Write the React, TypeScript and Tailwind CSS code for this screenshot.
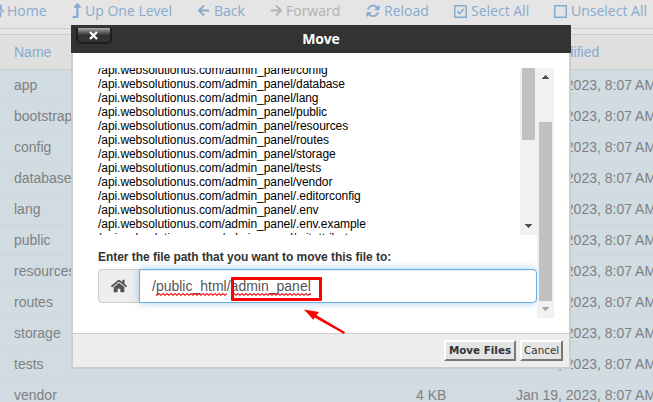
import React from "react";
import { FaArrowLeft, FaArrowRight, FaHome, FaLevelUpAlt } from "react-icons/fa";
import { FaArrowsRotate } from "react-icons/fa6";

const files = ["app", "bootstrap", "config", "database", "lang", "public", "resources", "routes", "storage", "tests", "vendor"];
const paths = ["config", "database", "lang", "public", "resources", "routes", "storage", "tests", "vendor", ".editorconfig", ".env", ".env.example", ".gitattributes"];

function Box({ checked = false }: { checked?: boolean }) {
  return (
    <svg width="13" height="13" viewBox="0 0 13 13" fill="none" stroke="currentColor">
      <rect x=".75" y=".75" width="11.5" height="11.5" strokeWidth="1.5" />
      {checked && <path d="M3.2 6.2 5.5 8.5 9.8 4" strokeWidth="1.6" />}
    </svg>
  );
}

function Tool({ className, icon, label }: { className: string; icon: React.ReactNode; label: string }) {
  return (
    <div className={`flex h-[22px] shrink-0 items-center ${className}`}>
      {icon}
      <span className="-mt-[2px] whitespace-nowrap">{label}</span>
    </div>
  );
}

function Arrow({ down = false, light = false }: { down?: boolean; light?: boolean }) {
  return (
    <svg width="7" height="4" viewBox="0 0 7 4" shapeRendering="crispEdges" className={`${down ? "rotate-180" : ""} ${light ? "text-[#a3a3a3]" : "text-[#505050]"}`}>
      <path d="M0 4V3H1V2H2V1H3V0H4V1H5V2H6V3H7V4Z" fill="currentColor" />
    </svg>
  );
}

function Misspelt({ children }: { children: string }) {
  return (
    <span className="relative inline-block">
      {children}
      <svg className="absolute bottom-[1px] left-0 h-[3px] w-full" aria-hidden="true">
        <defs>
          <pattern id="spelling" width="4" height="3" patternUnits="userSpaceOnUse">
            <path d="M-1 .5 1 2.3 3 .5 5 2.3" fill="none" stroke="#ee1111" strokeWidth="1.1" />
          </pattern>
        </defs>
        <rect width="100%" height="3" fill="url(#spelling)" />
      </svg>
    </span>
  );
}

export default function App() {
  return (
    <div className="relative h-[402px] w-[653px] overflow-hidden bg-[#e5e5e5] font-['Liberation_Sans',Arial,sans-serif] text-[14px] text-[#808080]">
      <div className="flex h-[29px] border-b border-[#cbcbcb] font-['Open_Sans',sans-serif] text-[14px] text-[#87abd0]">
        <Tool className="-ml-[12px] w-[84px] gap-[3px]" icon={<FaHome size={16} />} label="Home" />
        <Tool className="w-[125px] gap-[4px]" icon={<FaLevelUpAlt size={15} className="-mt-[2px] w-[9px]" preserveAspectRatio="none" />} label="Up One Level" />
        <Tool className="w-[73px] gap-[4px]" icon={<FaArrowLeft size={13} className="-mt-[1px]" />} label="Back" />
        <Tool className="w-[96px] gap-[3px] text-[#b1b1b1]" icon={<FaArrowRight size={13} className="-mt-[1px]" />} label="Forward" />
        <Tool className="w-[88px] gap-[4px]" icon={<FaArrowsRotate size={14} />} label="Reload" />
        <Tool className="w-[100px] gap-[4px]" icon={<Box checked />} label="Select All" />
        <Tool className="gap-[4px]" icon={<Box />} label="Unselect All" />
      </div>
      <div className="mt-[5px] border-t border-[#cbcbcb]">
        <div className="flex h-[35px] items-center border-b border-[#cbcbcb] bg-[#dfdfdf] text-[#87abd0]">
          <span className="ml-[14px] w-[502px] shrink-0">Name</span>
          <span className="whitespace-nowrap">Last Modified</span>
        </div>
        {files.map((file) => (
          <div key={file} className="flex h-[31px] items-center border-b border-[#d3d3d3] bg-[#d1dce2]">
            <span className="ml-[14px] w-[402px] shrink-0">{file}</span>
            <span className="w-[100px] shrink-0">4 KB</span>
            <span className="whitespace-nowrap">Jan 19, 2023, 8:07 AM</span>
          </div>
        ))}
      </div>

      <section className="absolute left-[71px] top-[25px] flex h-[344px] w-[500px] flex-col">
        <header className="relative h-[28px] shrink-0 bg-[#333]">
          <h2 className="text-center font-['Open_Sans',sans-serif] text-[14px] leading-[28px] font-bold tracking-[-0.2px] text-white">Move</h2>
          <button aria-label="Close" className="absolute left-[5px] top-[3px] flex h-[16px] w-[36px] items-center justify-center rounded-b-[5px] border-x-2 border-b-2 border-[#1c2022] bg-linear-to-b from-[#aaa] via-[#444_42%] to-[#333]">
            <svg width="9" height="9" viewBox="0 0 9 9" className="-ml-[2px]"><path d="m1 1 7 7M8 1 1 8" stroke="white" strokeWidth="2.3" /></svg>
          </button>
        </header>
        <div className="flex min-h-0 flex-1 flex-col border-x-2 border-b-2 border-[#ccc] bg-white">
          <div className="ml-[25px] mr-[15px] mt-[15px] flex h-[250px]">
            <div className="w-[439px] shrink-0">
              <div className="flex h-[167px] w-[439px]">
                <div className="min-w-0 flex-1 overflow-hidden text-[12px] leading-[14px] tracking-[-0.06px] text-black">
                  <div className="-mt-[5px]">
                    {paths.map((path) => <div key={path} className="whitespace-nowrap">/api.websolutionus.com/admin_panel/{path}</div>)}
                  </div>
                </div>
                <div className="flex w-[17px] flex-col items-center bg-[#f1f1f1]">
                  <div className="h-[72px] w-[13px] bg-[#c1c1c1]" />
                  <div className="mt-auto flex pb-[7px]"><Arrow down /></div>
                </div>
              </div>
              <div className="mt-[13px] h-[21px] text-[12px] leading-[18px] font-bold tracking-[-0.04px] text-[#333]">Enter the file path that you want to move this file to:</div>
              <div className="flex h-[34px] w-[439px]">
                <div className="flex w-[41px] items-center justify-center rounded-l-[4px] border border-r-0 border-[#ccc] bg-[#eee] text-[#555]">
                  <FaHome size={16} />
                </div>
                <div className="relative flex flex-1 items-center rounded-r-[4px] border border-[#66afe9] bg-white pl-[12px] text-[14px] text-[#555] shadow-[inset_0_1px_1px_rgba(0,0,0,0.08),0_0_8px_rgba(102,175,233,0.6)]">
                  <span className="whitespace-pre">/<Misspelt>public_html</Misspelt>/<Misspelt>admin_panel</Misspelt></span>
                </div>
              </div>
            </div>
            <div className="relative flex w-[17px] shrink-0 flex-col items-center bg-[#f1f1f1]">
              <div className="flex h-[54px] items-start pt-[7px]"><Arrow /></div>
              <div className="h-[179px] w-[13px] bg-[#c1c1c1]" />
              <div className="flex pt-[6px]"><Arrow down light /></div>
            </div>
          </div>
          <footer className="mt-auto flex h-[34px] items-center justify-end gap-[4px] border-t border-[#ccc] bg-[#ededed] pr-[6px] text-[11px] text-[#333]">
            <button className="h-[21px] w-[72px] border-2 border-t-white border-l-white border-r-[#777] border-b-[#777] bg-[#e4e4e4] font-['DejaVu_Sans',sans-serif] text-[11px] leading-[17px] font-bold whitespace-nowrap"><span className="-mx-2 inline-block origin-center scale-x-[.94]">Move Files</span></button>
            <button className="h-[21px] w-[43px] border-2 border-t-white border-l-white border-r-[#777] border-b-[#777] bg-[#e4e4e4] font-['DejaVu_Sans',sans-serif] text-[11px] leading-[17px] whitespace-nowrap"><span className="-mx-2 inline-block origin-center scale-x-[.94]">Cancel</span></button>
          </footer>
        </div>
      </section>
      <div className="absolute left-[231px] top-[277px] h-[24px] w-[91px] rounded-[1px] border-3 border-[#ff0000]" />
      <svg className="absolute left-[303px] top-[308px]" width="44" height="28" viewBox="0 0 44 28">
        <path d="M1 1.5 16 4 13.5 7.2 42 24 41 26 11.5 9.5 10.5 12Z" fill="#ff0000" />
      </svg>
    </div>
  );
}
